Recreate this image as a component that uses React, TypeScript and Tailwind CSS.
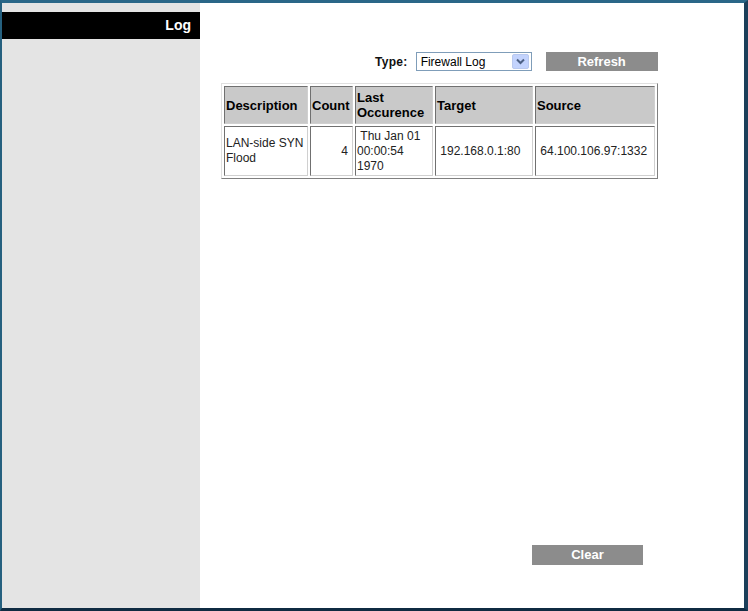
import React from "react";

const font = { fontFamily: '"Liberation Sans", Arial, sans-serif' };

function HeadCell({ children, w }: { children: React.ReactNode; w: string }) {
  return (
    <th
      className={`${w} h-[38px] border border-t-[#707070] border-l-[#707070] border-b-[#d0d0d0] border-r-[#d0d0d0] bg-[#c9c9c9] px-[1px] text-left align-middle text-[13px] font-bold leading-[15px] text-black`}
    >
      {children}
    </th>
  );
}

function BodyCell({ children, w, right }: { children: React.ReactNode; w: string; right?: boolean }) {
  return (
    <td
      className={`${w} h-[50px] border border-t-[#707070] border-l-[#707070] border-b-[#d0d0d0] border-r-[#d0d0d0] bg-white px-[1px] align-middle text-[12px] leading-[15px] text-[#222] ${right ? "text-right pr-[4px]" : "text-left"}`}
    >
      {children}
    </td>
  );
}

export default function App() {
  return (
    <div
      style={font}
      className="flex h-[611px] w-[748px] border-t-[3px] border-l-[2px] border-r-[4px] border-b-[3px] border-t-[#2a6788] border-l-[#25607f] border-r-[#1b3f5a] border-b-[#0f2b42]"
    >
      <aside className="w-[198px] shrink-0 bg-[#e4e4e4] pt-[9px]">
        <div className="flex h-[27px] items-center justify-end bg-black pr-[9px] text-[14px] font-bold text-white">
          Log
        </div>
      </aside>

      <main className="flex flex-1 flex-col bg-white pt-[49px]">
        <div className="flex h-[19px] items-center">
          <span className="ml-[175px] text-[12px] font-bold tracking-[0.3px] text-[#111]">Type:</span>
          <div className="ml-[8px] flex h-[19px] w-[116px] items-center justify-between border border-[#7f9db9] bg-white pl-[4px] pr-[2px] text-[12px] text-black">
            <span>Firewall Log</span>
            <span className="flex h-[15px] w-[17px] items-center justify-center rounded-[2px] border border-[#b9c9ef] bg-[#c3d3fd]">
              <svg width="9" height="7" viewBox="0 0 9 7">
                <path d="M1 1.5 L4.5 5 L8 1.5" fill="none" stroke="#4d6185" strokeWidth="2" />
              </svg>
            </span>
          </div>
          <button
            type="button"
            className="ml-[14px] h-[19px] w-[112px] bg-[#8c8c8c] text-[13px] font-bold text-white"
          >
            Refresh
          </button>
        </div>

        <table className="ml-[21px] mt-[12px] w-[437px] border border-t-[#e0e0e0] border-l-[#e0e0e0] border-b-[#808080] border-r-[#808080] border-separate border-spacing-[2px]">
          <thead>
            <tr>
              <HeadCell w="w-[84px]">Description</HeadCell>
              <HeadCell w="w-[43px]">Count</HeadCell>
              <HeadCell w="w-[78px]">
                Last
                <br />
                Occurence
              </HeadCell>
              <HeadCell w="w-[98px]">Target</HeadCell>
              <HeadCell w="w-[120px]">Source</HeadCell>
            </tr>
          </thead>
          <tbody>
            <tr>
              <BodyCell w="w-[84px]">
                LAN-side SYN
                <br />
                Flood
              </BodyCell>
              <BodyCell w="w-[43px]" right>
                4
              </BodyCell>
              <BodyCell w="w-[78px]">
                &nbsp;Thu Jan 01
                <br />
                00:00:54
                <br />
                1970
              </BodyCell>
              <BodyCell w="w-[98px]">&nbsp;192.168.0.1:80</BodyCell>
              <BodyCell w="w-[120px]">&nbsp;64.100.106.97:1332</BodyCell>
            </tr>
          </tbody>
        </table>

        <div className="mt-[363px]">
          <button
            type="button"
            className="ml-[332px] h-[20px] w-[111px] bg-[#8c8c8c] text-[13px] font-bold text-white"
          >
            Clear
          </button>
        </div>
      </main>
    </div>
  );
}
